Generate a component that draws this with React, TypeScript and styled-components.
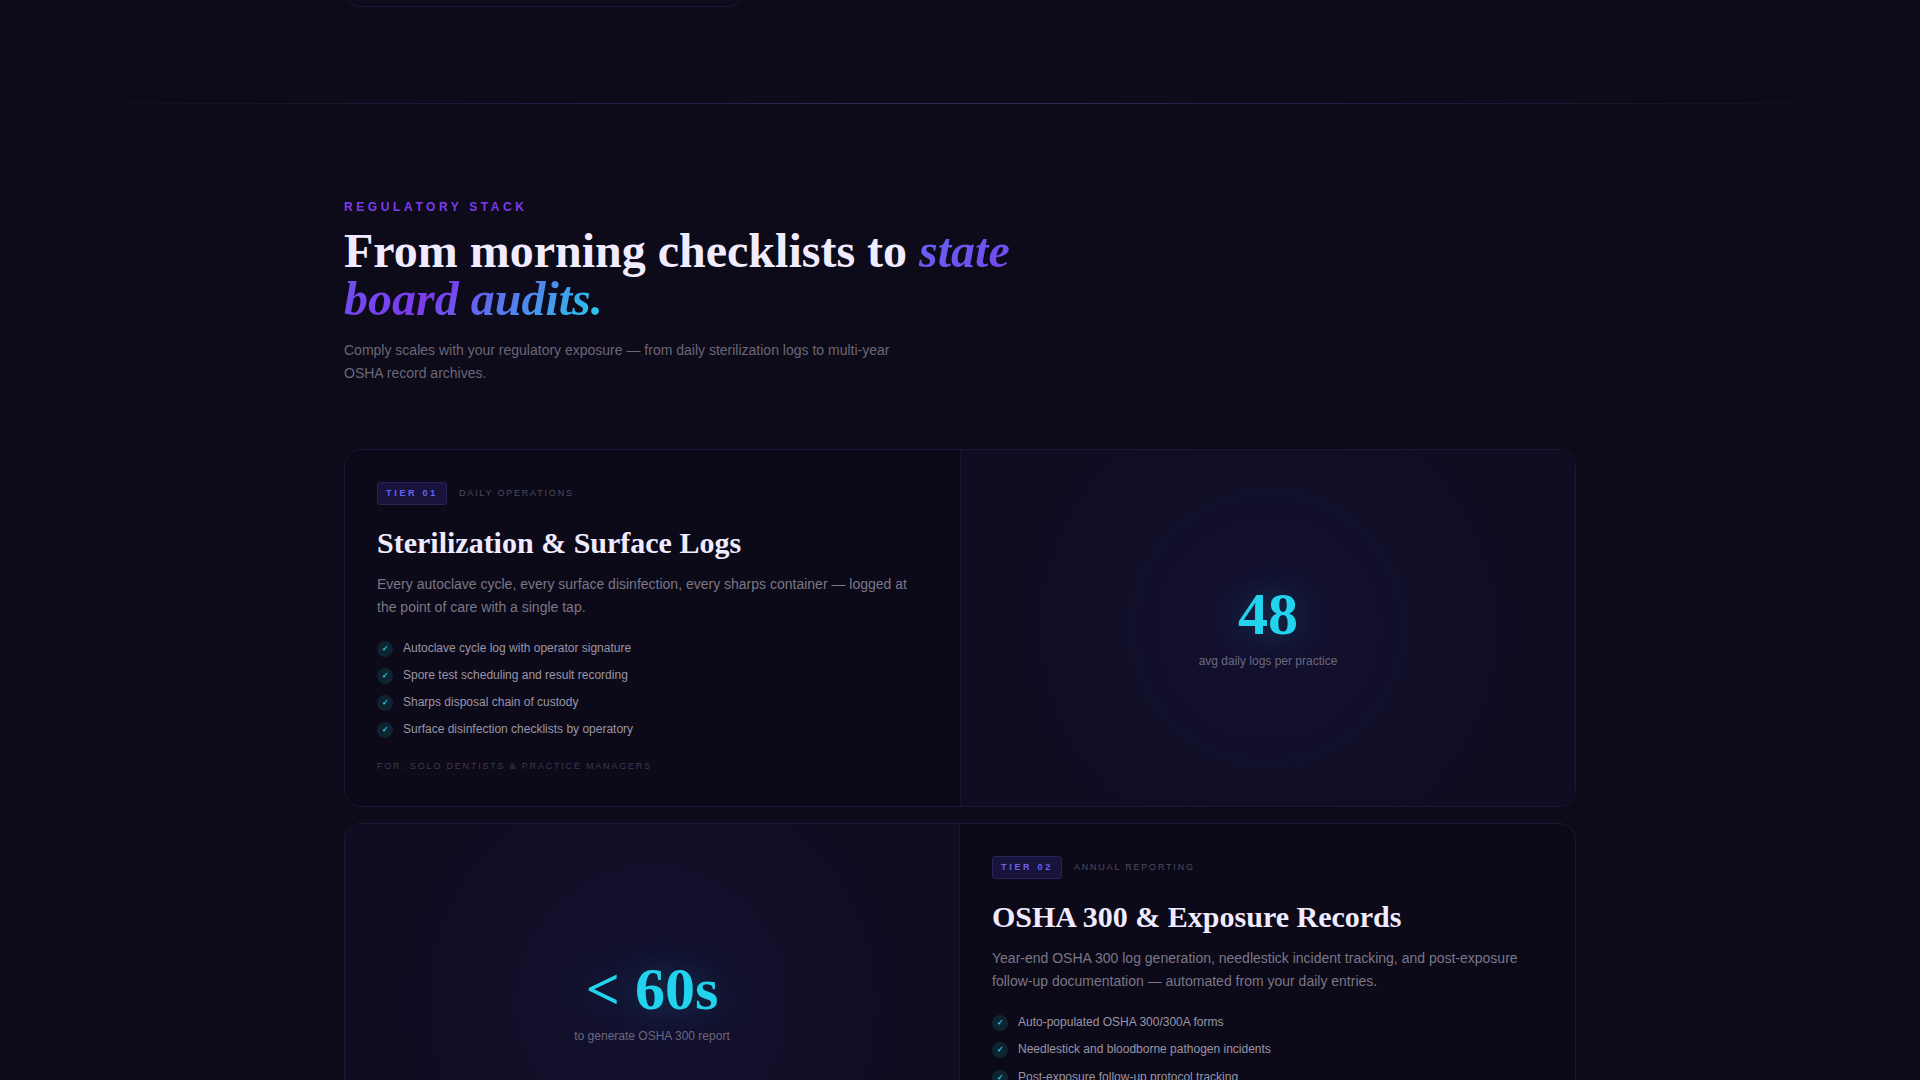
import React from "react";
import styled, { createGlobalStyle } from "styled-components";

const serif = `"Liberation Serif", "Times New Roman", serif`;
const sans = `"Liberation Sans", Arial, sans-serif`;

const GlobalStyle = createGlobalStyle`
  *, *::before, *::after { box-sizing: border-box; }
  html { background: #0d0a19; }
  body {
    margin: 0;
    height: 100vh;
    overflow: hidden;
    background: #0d0a19;
    color: #f0ebff;
    font-family: ${sans};
    -webkit-font-smoothing: antialiased;
  }
  h2, h3, p, ul { margin: 0; padding: 0; }
`;

const Container = styled.div`
  width: 100%;
  max-width: 1280px;
  margin: 0 auto;
  padding: 0 24px;
`;

const Previous = styled.section`
  margin-top: -41px;
  padding-bottom: 96px;
`;

const PreviousGrid = styled.div`
  display: grid;
  grid-template-columns: repeat(3, 1fr);
  gap: 16px;
`;

const PreviousCard = styled.div`
  height: 48px;
  border: 1px solid #1b1738;
  border-radius: 16px;
`;

const Divider = styled.hr`
  height: 1px;
  margin: 0;
  border: 0;
  background: linear-gradient(90deg, transparent, #2f2a5e, transparent);
`;

const Section = styled.section`
  padding: 96px 0;
`;

const Header = styled.header`
  display: flex;
  flex-direction: column;
  margin-bottom: 64px;
`;

const Eyebrow = styled.p`
  margin-bottom: 12px;
  color: #7c3aed;
  font-size: 12px;
  font-weight: 700;
  line-height: 15px;
  letter-spacing: 0.3em;
  text-transform: uppercase;
`;

const Heading = styled.h2`
  max-width: 720px;
  margin-bottom: 16px;
  font-family: ${serif};
  font-size: 48px;
  font-weight: 700;
  line-height: 48px;

  em {
    font-style: italic;
    color: transparent;
    background: linear-gradient(135deg, #6366f1 0%, #7c3aed 50%, #22d3ee 100%);
    -webkit-background-clip: text;
    background-clip: text;
  }
`;

const Lede = styled.p`
  max-width: 576px;
  color: #6b6777;
  font-size: 14px;
  line-height: 1.625;
`;

const Tiers = styled.div`
  display: flex;
  flex-direction: column;
  gap: 16px;
`;

const Card = styled.article`
  display: grid;
  grid-template-columns: 1fr 1fr;
  overflow: hidden;
  border: 1px solid #1b1738;
  border-radius: 16px;
  background: #0c0919;
`;

const Details = styled.div`
  padding: 32px;
`;

const TagRow = styled.div`
  display: flex;
  align-items: center;
  gap: 12px;
  margin-bottom: 20px;
`;

const Badge = styled.span`
  padding: 3px 8px;
  border: 1px solid #29235c;
  border-radius: 3px;
  background: #17133b;
  color: #6d62f0;
  font-size: 9px;
  font-weight: 700;
  line-height: 15px;
  letter-spacing: 0.3em;
  text-transform: uppercase;
`;

const Caption = styled.span`
  color: #4f4b5b;
  font-size: 9px;
  line-height: 15px;
  letter-spacing: 0.2em;
  text-transform: uppercase;
`;

const Title = styled.h3`
  margin-bottom: 12px;
  font-family: ${serif};
  font-size: 30px;
  font-weight: 700;
  line-height: 36px;
`;

const Summary = styled.p`
  margin-bottom: 20px;
  color: #7b7787;
  font-size: 14px;
  line-height: 23px;
`;

const Features = styled.ul`
  display: flex;
  flex-direction: column;
  gap: 8px;
  margin-bottom: 20px;
  list-style: none;
`;

const Feature = styled.li`
  display: flex;
  align-items: flex-start;
  gap: 10px;
  color: #9a96a6;
  font-size: 12px;
  line-height: 1.6;
`;

const Check = styled.span`
  display: flex;
  align-items: center;
  justify-content: center;
  width: 16px;
  height: 16px;
  margin-top: 2px;
  border-radius: 50%;
  background: #0e2431;
  color: #22d3ee;
  font-size: 8px;
  font-weight: 700;
  line-height: 1;
`;

const Audience = styled.p`
  color: #3f3b4a;
  font-size: 9px;
  line-height: 15px;
  letter-spacing: 0.2em;
  text-transform: uppercase;
`;

const Stat = styled.div<{ $first: boolean }>`
  display: flex;
  flex-direction: column;
  align-items: center;
  justify-content: center;
  gap: 8px;
  order: ${(p) => (p.$first ? -1 : 0)};
  border: 0 solid #17142d;
  border-width: ${(p) => (p.$first ? "0 1px 0 0" : "0 0 0 1px")};
  background: radial-gradient(circle at center, rgba(79, 60, 220, 0.08), transparent 70%), #0f0d22;
`;

const StatValue = styled.span`
  color: #22d3ee;
  font-family: ${serif};
  font-size: 60px;
  font-weight: 700;
  line-height: 1;
  text-shadow: 0 0 40px rgba(34, 211, 238, 0.3);
`;

const StatLabel = styled.span`
  color: #6b6780;
  font-size: 12px;
  line-height: 1.6;
`;

type Tier = {
  tag: string;
  caption: string;
  title: string;
  summary: string;
  features: string[];
  audience: string;
  value: string;
  label: string;
};

const tiers: Tier[] = [
  {
    tag: "Tier 01",
    caption: "Daily Operations",
    title: "Sterilization & Surface Logs",
    summary:
      "Every autoclave cycle, every surface disinfection, every sharps container — logged at the point of care with a single tap.",
    features: [
      "Autoclave cycle log with operator signature",
      "Spore test scheduling and result recording",
      "Sharps disposal chain of custody",
      "Surface disinfection checklists by operatory",
    ],
    audience: "For: Solo dentists & practice managers",
    value: "48",
    label: "avg daily logs per practice",
  },
  {
    tag: "Tier 02",
    caption: "Annual Reporting",
    title: "OSHA 300 & Exposure Records",
    summary:
      "Year-end OSHA 300 log generation, needlestick incident tracking, and post-exposure follow-up documentation — automated from your daily entries.",
    features: [
      "Auto-populated OSHA 300/300A forms",
      "Needlestick and bloodborne pathogen incidents",
      "Post-exposure follow-up protocol tracking",
      "Multi-year OSHA record archives",
    ],
    audience: "For: Compliance officers",
    value: "< 60s",
    label: "to generate OSHA 300 report",
  },
];

function TierCard({ tier, flipped }: { tier: Tier; flipped: boolean }) {
  return (
    <Card>
      <Details>
        <TagRow>
          <Badge>{tier.tag}</Badge>
          <Caption>{tier.caption}</Caption>
        </TagRow>
        <Title>{tier.title}</Title>
        <Summary>{tier.summary}</Summary>
        <Features>
          {tier.features.map((feature) => (
            <Feature key={feature}>
              <Check aria-hidden="true">✓</Check>
              {feature}
            </Feature>
          ))}
        </Features>
        <Audience>{tier.audience}</Audience>
      </Details>
      <Stat $first={flipped}>
        <StatValue>{tier.value}</StatValue>
        <StatLabel>{tier.label}</StatLabel>
      </Stat>
    </Card>
  );
}

export default function App() {
  return (
    <>
      <GlobalStyle />
      <main>
        <Previous>
          <Container>
            <PreviousGrid>
              <PreviousCard />
            </PreviousGrid>
          </Container>
        </Previous>
        <Divider />
        <Section>
          <Container>
            <Header>
              <Eyebrow>Regulatory Stack</Eyebrow>
              <Heading>
                From morning checklists to <em>state board audits.</em>
              </Heading>
              <Lede>
                Comply scales with your regulatory exposure — from daily sterilization logs to
                multi-year OSHA record archives.
              </Lede>
            </Header>
            <Tiers>
              {tiers.map((tier, index) => (
                <TierCard key={tier.tag} tier={tier} flipped={index % 2 === 1} />
              ))}
            </Tiers>
          </Container>
        </Section>
      </main>
    </>
  );
}
